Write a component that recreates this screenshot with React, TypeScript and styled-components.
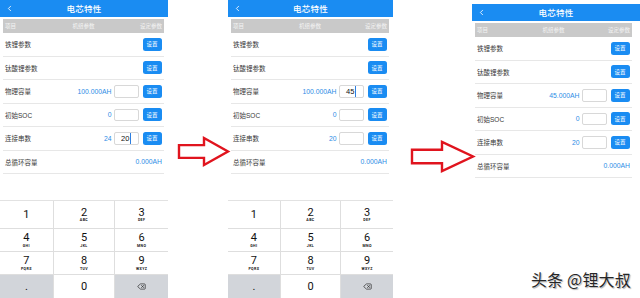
import React, { ReactElement } from 'react';
import styled, { createGlobalStyle } from 'styled-components';
import { ChevronLeft, Delete } from 'lucide-react';

// global  --------------------------------------------------
const GlobalStyle = createGlobalStyle`
  html, body {
    margin: 0;
    padding: 0;
    background: #ffffff;
  }
  * {
    box-sizing: border-box;
  }
`;

const BLUE = '#1a8cf2';
const VALUE_BLUE = '#2c8de6';

// style  ---------------------------------------------------
const Page = styled.div`
  position: relative;
  width: 640px;
  height: 298px;
  display: flex;
  overflow: hidden;
  font-family: 'Liberation Sans', 'Noto Sans CJK SC', sans-serif;
`;

interface PhoneProps {
  $width: number;
  $top: number;
  $padRight: number;
}
const Phone = styled.div<PhoneProps>`
  width: ${({ $width }) => $width}px;
  flex-shrink: 0;
  height: 298px;
  padding-top: ${({ $top }) => $top}px;
  display: flex;
  flex-direction: column;
  --pad-right: ${({ $padRight }) => $padRight}px;
`;

const NavBar = styled.div`
  height: 16.5px;
  background: ${BLUE};
  color: #ffffff;
  display: grid;
  grid-template-columns: 22px 1fr 22px;
  align-items: center;
`;

const BackIcon = styled.span`
  display: flex;
  align-items: center;
  padding-left: 5px;
`;

const Title = styled.div`
  text-align: center;
  font-size: 8.5px;
  font-weight: 500;
  letter-spacing: 0.3px;
`;

const Table = styled.div`
  padding: 0 var(--pad-right) 0 3px;
  margin-top: 2.5px;
`;

const HeadBar = styled.div`
  height: 14px;
  background: #c9c9c9;
  color: #f4f4f4;
  font-size: 5.5px;
  display: grid;
  grid-template-columns: 1fr auto 1fr;
  align-items: center;
  padding: 0 2px;
`;

interface CellProps {
  $align: 'start' | 'center' | 'end';
}
const HeadCell = styled.span<CellProps>`
  justify-self: ${({ $align }) => $align};
`;

const Row = styled.div`
  height: 23.5px;
  border-bottom: 1px solid #e7e7e7;
  display: flex;
  align-items: center;
  padding: 0 2px 0 2px;
`;

const Label = styled.span`
  flex: 1;
  font-size: 6.5px;
  color: #3a3a3a;
`;

const Value = styled.span`
  font-size: 6.8px;
  color: ${VALUE_BLUE};
`;

const InputBox = styled.div`
  width: 25px;
  height: 12.5px;
  margin-left: 2px;
  border: 1px solid #d8d8d8;
  border-radius: 2px;
  background: #ffffff;
  display: flex;
  align-items: center;
  justify-content: center;
  font-size: 7.5px;
  color: #111111;
`;

const Caret = styled.span`
  width: 1px;
  height: 11px;
  margin-left: 0.5px;
  background: #2f7fe0;
`;

const SetButton = styled.div`
  width: 19px;
  height: 13px;
  margin-left: 4px;
  margin-right: 0.5px;
  border-radius: 2.5px;
  background: ${BLUE};
  color: #ffffff;
  font-size: 5.5px;
  display: flex;
  align-items: center;
  justify-content: center;
`;

const Keyboard = styled.div`
  margin-top: auto;
  height: 98px;
  display: grid;
  grid-template-columns: 1fr 1.15fr 1fr;
  grid-template-rows: 27px 22px 22px 1fr;
  gap: 1px;
  background: #dedede;
  border-top: 1px solid #e2e2e2;
`;

interface KeyProps {
  $dim?: boolean;
}
const Key = styled.div<KeyProps>`
  background: ${({ $dim }) => ($dim ? '#d2d5da' : '#ffffff')};
  display: flex;
  flex-direction: column;
  align-items: center;
  justify-content: center;
  color: #111111;
  font-family: Roboto, 'Liberation Sans', sans-serif;
`;

const Digit = styled.span`
  font-size: 11px;
  line-height: 11px;
`;

const Letters = styled.span`
  font-size: 3.6px;
  line-height: 4px;
  font-weight: 700;
  letter-spacing: 0.4px;
  margin-top: 0.5px;
`;

interface GapProps {
  $width: number;
}
const Gap = styled.div<GapProps>`
  width: ${({ $width }) => $width}px;
  flex-shrink: 0;
  display: flex;
  align-items: flex-start;
`;

interface ArrowProps {
  $left: number;
  $top: number;
}
const ArrowSvg = styled.svg<ArrowProps>`
  flex-shrink: 0;
  margin-left: ${({ $left }) => $left}px;
  margin-top: ${({ $top }) => $top}px;
  overflow: visible;
`;

const Watermark = styled.div`
  position: absolute;
  right: 9px;
  bottom: 7px;
  font-family: 'Noto Sans CJK SC', sans-serif;
  font-size: 16px;
  color: #262626;
  letter-spacing: 0.2px;
  text-shadow: 0 0 1px #ffffff, 1px 1px 1px rgba(0, 0, 0, 0.35);
`;

// data  ----------------------------------------------------
interface RowData {
  label: string;
  value?: string;
  input?: string;
  caret?: boolean;
  button?: boolean;
}

interface PanelData {
  width: number;
  top: number;
  padRight: number;
  keyboard: boolean;
  rows: RowData[];
}

const buildRows = (
  capacity: string,
  input: [string, string, string],
  caret: number,
  series: string,
): RowData[] => [
  { label: '铁锂参数', button: true },
  { label: '钛酸锂参数', button: true },
  { label: '物理容量', value: capacity, input: input[0], caret: caret === 0, button: true },
  { label: '初始SOC', value: '0', input: input[1], caret: caret === 1, button: true },
  { label: '连接串数', value: series, input: input[2], caret: caret === 2, button: true },
  { label: '总循环容量', value: '0.000AH' },
];

const panels: PanelData[] = [
  {
    width: 168,
    top: 0,
    padRight: 4,
    keyboard: true,
    rows: buildRows('100.000AH', ['', '', '20'], 2, '24'),
  },
  {
    width: 165,
    top: 0,
    padRight: 4,
    keyboard: true,
    rows: buildRows('100.000AH', ['45', '', ''], 0, '20'),
  },
  {
    width: 168,
    top: 4,
    padRight: 8,
    keyboard: false,
    rows: buildRows('45.000AH', ['', '', ''], -1, '20'),
  },
];

const keys: { digit: string; letters?: string }[] = [
  { digit: '1' },
  { digit: '2', letters: 'ABC' },
  { digit: '3', letters: 'DEF' },
  { digit: '4', letters: 'GHI' },
  { digit: '5', letters: 'JKL' },
  { digit: '6', letters: 'MNO' },
  { digit: '7', letters: 'PQRS' },
  { digit: '8', letters: 'TUV' },
  { digit: '9', letters: 'WXYZ' },
];

// Element  -------------------------------------------------
function NumberPad(): ReactElement {
  return (
    <Keyboard>
      {keys.map((k) => (
        <Key key={k.digit}>
          <Digit>{k.digit}</Digit>
          {k.letters && <Letters>{k.letters}</Letters>}
        </Key>
      ))}
      <Key $dim>
        <Digit>.</Digit>
      </Key>
      <Key>
        <Digit>0</Digit>
      </Key>
      <Key $dim>
        <Delete size={9} strokeWidth={1.6} />
      </Key>
    </Keyboard>
  );
}

function CellPanel({ panel }: { panel: PanelData }): ReactElement {
  return (
    <Phone $width={panel.width} $top={panel.top} $padRight={panel.padRight}>
      <NavBar>
        <BackIcon>
          <ChevronLeft size={9} strokeWidth={2.2} />
        </BackIcon>
        <Title>电芯特性</Title>
        <span />
      </NavBar>
      <Table>
        <HeadBar>
          <HeadCell $align="start">项目</HeadCell>
          <HeadCell $align="center">机组参数</HeadCell>
          <HeadCell $align="end">设定参数</HeadCell>
        </HeadBar>
        {panel.rows.map((row) => (
          <Row key={row.label}>
            <Label>{row.label}</Label>
            {row.value && <Value>{row.value}</Value>}
            {row.input !== undefined && (
              <InputBox>
                {row.input}
                {row.caret && <Caret />}
              </InputBox>
            )}
            {row.button && <SetButton>设置</SetButton>}
          </Row>
        ))}
      </Table>
      {panel.keyboard && <NumberPad />}
    </Phone>
  );
}

function Arrow({
  left,
  top,
  w,
  h,
  head,
}: {
  left: number;
  top: number;
  w: number;
  h: number;
  head: number;
}): ReactElement {
  const mid = h / 2;
  const shaft = h * 0.22;
  const points = [
    [1, mid - shaft],
    [head, mid - shaft],
    [head, 1],
    [w - 1, mid],
    [head, h - 1],
    [head, mid + shaft],
    [1, mid + shaft],
  ]
    .map((p) => p.join(','))
    .join(' ');
  return (
    <ArrowSvg $left={left} $top={top} width={w} height={h} viewBox={`0 0 ${w} ${h}`}>
      <polygon
        points={points}
        fill="#ffffff"
        stroke="#e0141e"
        strokeWidth={2.4}
        strokeLinejoin="miter"
      />
    </ArrowSvg>
  );
}

export default function App(): ReactElement {
  return (
    <Page>
      <GlobalStyle />
      <CellPanel panel={panels[0]} />
      <Gap $width={60}>
        <Arrow left={10} top={137} w={51} h={29} head={26} />
      </Gap>
      <CellPanel panel={panels[1]} />
      <Gap $width={79}>
        <Arrow left={18} top={141} w={63} h={31} head={31} />
      </Gap>
      <CellPanel panel={panels[2]} />
      <Watermark>头条 @锂大叔</Watermark>
    </Page>
  );
}
